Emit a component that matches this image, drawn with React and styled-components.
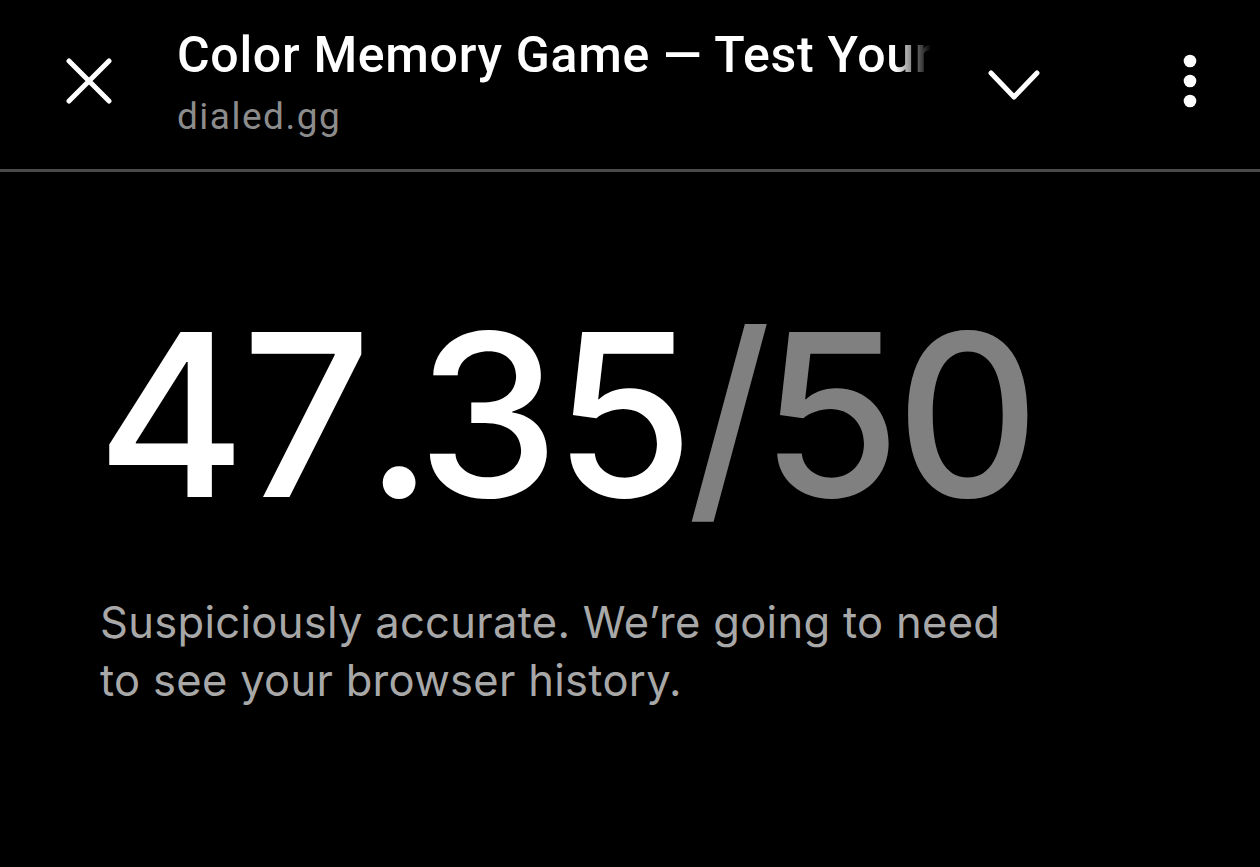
import React from "react";
import styled, { createGlobalStyle } from "styled-components";

const Global = createGlobalStyle`
  html, body { margin: 0; padding: 0; background: #000; }
  body { width: 1260px; height: 867px; overflow: hidden; }
  * { box-sizing: border-box; }
`;

const Page = styled.div`
  width: 1260px;
  height: 867px;
  background: #000;
  display: flex;
  flex-direction: column;
`;

const Header = styled.header`
  height: 172px;
  flex: none;
  border-bottom: 3px solid #4a4a4a;
  display: flex;
  align-items: flex-start;
  padding: 0 0 0 66px;
`;

const IconButton = styled.button`
  all: unset;
  display: flex;
  align-items: center;
  justify-content: center;
  width: ${(p) => p.$w}px;
  height: ${(p) => p.$h}px;
  margin-top: ${(p) => p.$top}px;
  margin-left: ${(p) => p.$left || 0}px;
  color: #fff;
`;

const TitleBlock = styled.div`
  width: 754px;
  margin-left: 65px;
  padding-top: 25px;
  overflow: hidden;
  font-family: Roboto, "Noto Sans", sans-serif;
`;

const Title = styled.div`
  font-size: 50px;
  line-height: 60px;
  font-weight: 500;
  letter-spacing: 0.7px;
  color: #fff;
  white-space: nowrap;
  overflow: hidden;
  -webkit-mask-image: linear-gradient(to right, #000 calc(100% - 36px), transparent 100%);
  mask-image: linear-gradient(to right, #000 calc(100% - 36px), transparent 100%);
`;

const Domain = styled.div`
  margin-top: 10px;
  font-size: 37px;
  line-height: 44px;
  letter-spacing: 1.5px;
  color: #8c8c8c;
`;

const Main = styled.main`
  padding: 129px 0 0 98px;
  font-family: Inter, "Noto Sans", sans-serif;
`;

const Score = styled.div`
  font-size: 227px;
  line-height: 1;
  font-weight: 500;
  color: #fff;
  white-space: nowrap;
  letter-spacing: -12px;
  font-feature-settings: "tnum" 1;
  font-variant-numeric: tabular-nums;
`;

const Total = styled.span`
  color: #808080;
`;

const Message = styled.p`
  margin: 65px 0 0 2px;
  width: 940px;
  font-size: 43.5px;
  line-height: 58px;
  letter-spacing: 0.3px;
  color: #a8a8a8;
`;

const CloseIcon = () => (
  <svg width="46" height="46" viewBox="0 0 46 46" fill="none" stroke="currentColor" strokeWidth="5" strokeLinecap="round">
    <path d="M3 3 L43 43 M43 3 L3 43" />
  </svg>
);

const ChevronIcon = () => (
  <svg width="52" height="32" viewBox="0 0 52 32" fill="none" stroke="currentColor" strokeWidth="5" strokeLinecap="round" strokeLinejoin="round">
    <path d="M3 4 L26 28 L49 4" />
  </svg>
);

const DotsIcon = () => (
  <svg width="14" height="54" viewBox="0 0 14 54" fill="currentColor">
    <circle cx="7" cy="7" r="6.3" />
    <circle cx="7" cy="27" r="6.3" />
    <circle cx="7" cy="47" r="6.3" />
  </svg>
);

export default function App() {
  return (
    <Page>
      <Global />
      <Header>
        <IconButton $w={46} $h={46} $top={58}>
          <CloseIcon />
        </IconButton>
        <TitleBlock>
          <Title>Color Memory Game — Test Your Color Memory</Title>
          <Domain>dialed.gg</Domain>
        </TitleBlock>
        <IconButton $w={52} $h={32} $top={69} $left={57}>
          <ChevronIcon />
        </IconButton>
        <IconButton $w={14} $h={54} $top={54} $left={143}>
          <DotsIcon />
        </IconButton>
      </Header>
      <Main>
        <Score>
          47.35<Total>/50</Total>
        </Score>
        <Message>Suspiciously accurate. We’re going to need to see your browser history.</Message>
      </Main>
    </Page>
  );
}
